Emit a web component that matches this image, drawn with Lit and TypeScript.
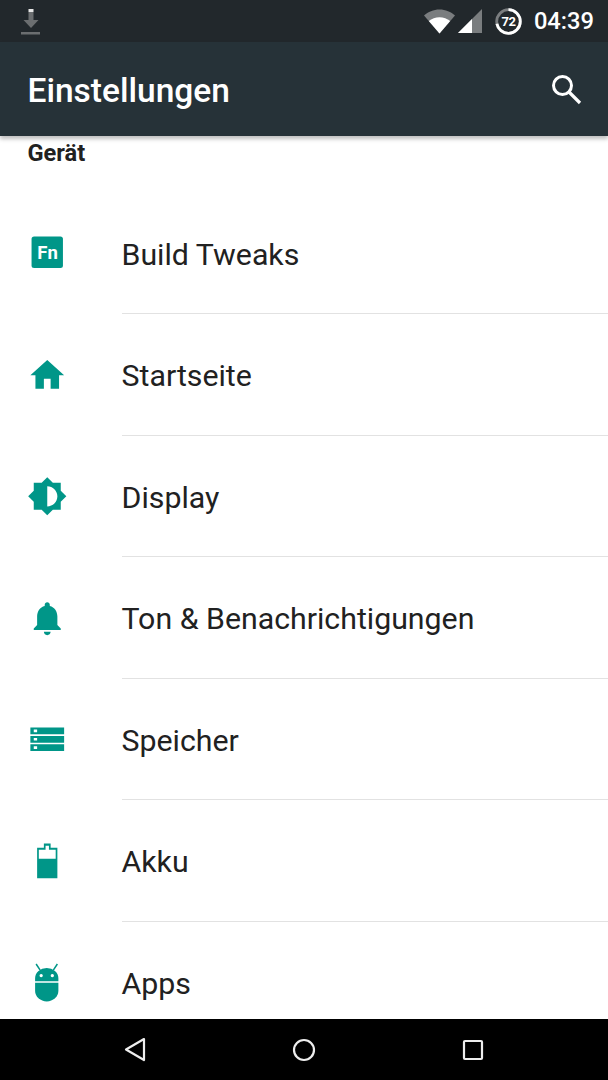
import { LitElement, css, html, svg } from 'lit'
import { customElement } from 'lit/decorators.js'

const ICONS = {
  fn: html`<svg class="icon" viewBox="0 0 40 40">
    <rect x="4.5" y="3.5" width="31" height="31" rx="2.5" fill="#009688"></rect>
  </svg><span class="fn">Fn</span>`,
  home: html`<svg class="icon" viewBox="0 0 24 24"><path d="M10 20v-6h4v6h5v-8h3L12 3 2 12h3v8z"/></svg>`,
  display: html`<svg class="icon" viewBox="0 0 24 24"><path d="M20 15.31L23.31 12 20 8.69V4h-4.69L12 .69 8.69 4H4v4.69L.69 12 4 15.31V20h4.69L12 23.31 15.31 20H20v-4.69zM12 18V6c3.31 0 6 2.69 6 6s-2.69 6-6 6z"/></svg>`,
  bell: html`<svg class="icon" viewBox="0 0 24 24"><path d="M12 22c1.1 0 2-.9 2-2h-4c0 1.1.9 2 2 2zm6-6v-5c0-3.07-1.63-5.64-4.5-6.32V4c0-.83-.67-1.5-1.5-1.5s-1.5.67-1.5 1.5v.68C7.64 5.36 6 7.92 6 11v5l-2 2v1h16v-1l-2-2z"/></svg>`,
  storage: html`<svg class="icon" viewBox="0 0 24 24"><path fill-rule="evenodd" d="M2 5h20v4H2zM4 6.2v1.6h2V6.2zM2 10h20v4H2zM4 11.2v1.6h2v-1.6zM2 15h20v4H2zM4 16.2v1.6h2v-1.6z"/></svg>`,
  battery: html`<svg class="icon" viewBox="0 0 24 24"><path fill-rule="evenodd" d="M6 4h4V1.500h4V4h4v18H6zM7 5.200V10.500h10V5.200h-4V2.800h-2V5.200z"/></svg>`,
  android: html`<svg class="icon" viewBox="0 0 40 40">
    <path d="M8 19v-3a11.5 10 0 0 1 23 0v3zM14 11.9a1.6 1.6 0 1 0 .01 0zM25 11.9a1.6 1.6 0 1 0 .01 0z" fill-rule="evenodd"/>
    <path d="M8 20.5h23v8a11.5 10.5 0 0 1-23 0z"/>
    <path d="M9 2l4 6M30 2l-4 6" stroke="#009688" stroke-width="1.5" fill="none"/>
  </svg>`,
}

const ITEMS = [
  { icon: ICONS.fn, label: 'Build Tweaks' },
  { icon: ICONS.home, label: 'Startseite' },
  { icon: ICONS.display, label: 'Display' },
  { icon: ICONS.bell, label: 'Ton & Benachrichtigungen' },
  { icon: ICONS.storage, label: 'Speicher' },
  { icon: ICONS.battery, label: 'Akku' },
  { icon: ICONS.android, label: 'Apps' },
]

@customElement('app-root')
export class AppRoot extends LitElement {
  render() {
    return html`
      <div class="status">
        <svg class="download" width="20" height="26" viewBox="0 0 20 26">
          <rect x="7.5" y="0" width="5" height="3" fill="#e6e6e6"></rect>
          <path d="M7.5 3h5v8h5l-7.5 8-7.5-8h5z" fill="#6b6e70"></path>
          <rect x="0" y="23" width="19" height="2.5" fill="#6b6e70"></rect>
        </svg>
        <div class="status-right">
          <svg width="31" height="25" viewBox="0 0 31 25">
            <path d="M0 6.5C4 3 9.500 .5 15.500 .5S27 3 31 6.500L15.500 24.500z" fill="#7a7d7f"></path>
            <path d="M4.800 12C7.800 9.500 11.500 8.200 15.500 8.200S23.200 9.500 26.200 12L15.500 24.500z" fill="#fff"></path>
          </svg>
          <svg class="signal" width="24" height="24" viewBox="0 0 24 24">
            <path d="M0 24L24 0v24z" fill="#7a7d7f"></path>
            <path d="M0 24L14 10v14z" fill="#fff"></path>
          </svg>
          <div class="batt">
            <svg width="27" height="27" viewBox="0 0 27 27">
              <circle cx="13.500" cy="13.500" r="11.800" fill="none" stroke="#7a7d7f" stroke-width="2.800"></circle>
              ${svg`<circle cx="13.500" cy="13.500" r="11.800" fill="none" stroke="#fff" stroke-width="2.800"
                pathLength="100" stroke-dasharray="72 28" transform="rotate(-90 13.500 13.500)"></circle>`}
            </svg>
            <span>72</span>
          </div>
          <span class="time">04:39</span>
        </div>
      </div>
      <header class="toolbar">
        <h1>Einstellungen</h1>
        <svg class="search" width="32" height="32" viewBox="0 0 32 32">
          <circle cx="12.500" cy="12.500" r="9" fill="none" stroke="#fff" stroke-width="3"></circle>
          <path d="M19 19l11 11" stroke="#fff" stroke-width="3.200" fill="none"></path>
        </svg>
      </header>
      <main class="list">
        <div class="section">Gerät</div>
        ${ITEMS.map(
          (item) => html`
            <div class="row">
              <div class="icon-box">${item.icon}</div>
              <div class="label">${item.label}</div>
            </div>
          `
        )}
      </main>
      <nav class="nav">
        <svg width="22" height="25" viewBox="0 0 22 25">
          <path d="M20 2L2 12.500 20 23z" fill="none" stroke="#eee" stroke-width="2.200" stroke-linejoin="round"></path>
        </svg>
        <svg width="24" height="24" viewBox="0 0 24 24">
          <circle cx="12" cy="12" r="10" fill="none" stroke="#eee" stroke-width="2.200"></circle>
        </svg>
        <svg width="22" height="22" viewBox="0 0 22 22">
          <rect x="2" y="2" width="18" height="18" rx="1" fill="none" stroke="#eee" stroke-width="2.200"></rect>
        </svg>
      </nav>
    `
  }

  static styles = css`
    :host {
      display: flex;
      flex-direction: column;
      height: 1080px;
      width: 608px;
      overflow: hidden;
      background: #fff;
      font-family: Roboto, 'Liberation Sans', sans-serif;
    }
    .status {
      flex: none;
      height: 42px;
      box-sizing: border-box;
      padding: 0 14px 0 21px;
      background: #22282c;
      display: flex;
      align-items: center;
      justify-content: space-between;
    }
    .download {
      margin-top: 1px;
    }
    .status-right {
      display: flex;
      align-items: center;
    }
    .signal {
      margin-left: 3px;
    }
    .batt {
      position: relative;
      width: 27px;
      height: 27px;
      margin-left: 13px;
    }
    .batt svg {
      display: block;
    }
    .batt span {
      position: absolute;
      inset: 0;
      display: flex;
      align-items: center;
      justify-content: center;
      font-size: 13px;
      font-weight: 700;
      letter-spacing: -0.5px;
      color: #fff;
    }
    .time {
      margin-left: 12px;
      font-size: 23.7px;
      font-weight: 500;
      color: #fff;
    }
    .toolbar {
      flex: none;
      height: 94px;
      box-sizing: border-box;
      padding: 0 26px 0 27.5px;
      background: #263238;
      display: flex;
      align-items: center;
      justify-content: space-between;
      box-shadow: 0 3px 4px rgba(0, 0, 0, 0.25);
      position: relative;
      z-index: 1;
    }
    h1 {
      margin: 3px 0 0;
      font-size: 33.5px;
      font-weight: 500;
      color: #fff;
    }
    .list {
      flex: 1;
      min-height: 0;
      overflow: hidden;
    }
    .section {
      height: 56.5px;
      box-sizing: border-box;
      padding: 3px 0 0 27.5px;
      font-size: 23.6px;
      line-height: 28px;
      font-weight: 700;
      color: #212121;
    }
    .row {
      display: flex;
      height: 121.5px;
    }
    .icon-box {
      flex: none;
      width: 95px;
      position: relative;
      display: flex;
      align-items: center;
      justify-content: center;
    }
    .icon {
      width: 40.5px;
      height: 40.5px;
      fill: #009688;
    }
    .fn {
      position: absolute;
      left: 0;
      right: 0;
      text-align: center;
      font-size: 18.5px;
      font-weight: 700;
      color: #fff;
    }
    .label {
      flex: 1;
      margin-left: 26.5px;
      padding-top: 3px;
      display: flex;
      align-items: center;
      border-bottom: 1.5px solid #e2e2e2;
      font-size: 30.3px;
      color: #212121;
    }
    .nav {
      flex: none;
      height: 61px;
      background: #000;
      display: grid;
      grid-template-columns: repeat(3, 169px);
      justify-content: center;
      justify-items: center;
      align-items: center;
    }
  `
}

declare global {
  interface HTMLElementTagNameMap {
    'app-root': AppRoot
  }
}
